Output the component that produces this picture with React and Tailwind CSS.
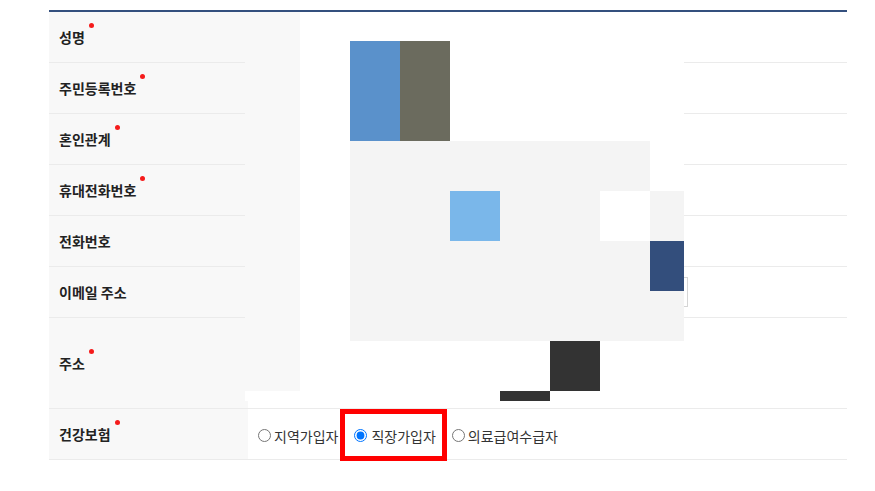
import React from "react";

const rows = [
  { label: "성명", req: true },
  { label: "주민등록번호", req: true },
  { label: "혼인관계", req: true },
  { label: "휴대전화번호", req: true },
  { label: "전화번호", req: false },
  { label: "이메일 주소", req: false, input: true },
  { label: "주소", req: true, tall: true },
];

// redaction mosaic colours
const tone = {
  L: "bg-[#f8f8f8]",
  W: "bg-white",
  B: "bg-[#5a91cb]",
  G: "bg-[#6b6b5e]",
  F: "bg-[#f4f4f4]",
  S: "bg-[#7ab7ea]",
  N: "bg-[#334e7c]",
  D: "bg-[#333333]",
};

const mosaic = [
  "LWWWWWWWW",
  "LWBGWWWWW",
  "LWBGWWWWW",
  "LWFFFFFFW",
  "LWFFSFFWF",
  "LWFFFFFFN",
  "LWFFFFFFF",
  "LWWWWWDWW",
  "WWWWWDWWW",
];

const Label = ({ text, req }) => (
  <span className="relative leading-[20px]">
    {text}
    {req && (
      <span className="absolute -right-[9px] -top-[4px] w-[5px] h-[5px] rounded-full bg-[#f51b1b]" />
    )}
  </span>
);

const App = () => {
  return (
    <div className="min-h-screen bg-white pt-[10px] pl-[49px] font-['Noto_Sans_CJK_KR',sans-serif]">
      <div className="relative w-[798px] border-t-2 border-[#34507e]">
        {rows.map((row, index) => (
          <div key={index} className="flex border-b border-[#ebebeb]">
            <div
              className={`w-[199px] flex items-center pl-[10px] bg-[#f8f8f8] text-[14px] font-bold text-[#222] ${
                row.tall ? "h-[90px]" : "h-[50px]"
              }`}
            >
              <Label text={row.label} req={row.req} />
            </div>
            <div className="flex-1 flex items-center pl-[10px] bg-white">
              {row.input && (
                <input
                  type="text"
                  className="w-[430px] h-[30px] border border-[#d5d5d5] bg-white"
                />
              )}
            </div>
          </div>
        ))}

        <div className="flex border-b border-[#ebebeb]">
          <div className="w-[199px] h-[50px] flex items-center pl-[10px] bg-[#f8f8f8] text-[14px] font-bold text-[#222]">
            <Label text="건강보험" req />
          </div>
          <div className="flex-1 flex items-center gap-[16px] pl-[10px] pt-[3px] bg-white text-[14px] text-[#333]">
            <label className="flex items-center gap-[3px] h-[20px] leading-[20px]">
              <input type="radio" name="hi" className="w-[13px] h-[13px]" />
              <span>지역가입자</span>
            </label>
            <label className="relative flex items-center gap-[4px] h-[20px] leading-[20px]">
              <input type="radio" name="hi" defaultChecked className="w-[13px] h-[13px]" />
              <span>직장가입자</span>
              <span className="absolute -left-[14px] -right-[11px] -top-[17px] -bottom-[15px] border-[5px] border-[#ff0000]" />
            </label>
            <label className="flex items-center gap-[3px] h-[20px] leading-[20px]">
              <input type="radio" name="hi" className="w-[13px] h-[13px]" />
              <span>의료급여수급자</span>
            </label>
          </div>
        </div>

        {/* blurred-out personal data */}
        <div className="absolute left-[196px] top-0 w-[439px] h-[389px] grid grid-cols-[55px_50px_50px_50px_50px_50px_50px_50px_34px] grid-rows-[29px_50px_50px_50px_50px_50px_50px_50px_10px]">
          {mosaic.map((line, r) =>
            line.split("").map((c, k) => <div key={`${r}-${k}`} className={tone[c]} />)
          )}
        </div>
      </div>
    </div>
  );
};

export default App;
